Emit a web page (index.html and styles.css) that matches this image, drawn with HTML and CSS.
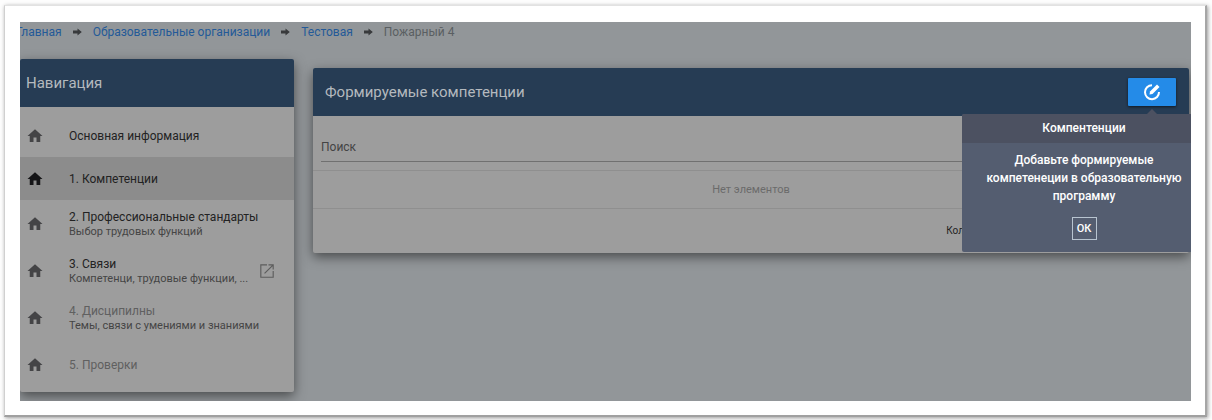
FILE: index.html
```html
<!DOCTYPE html>
<html lang="ru">

<head>
    <meta charset="UTF-8">
    <meta name="viewport" content="width=device-width, initial-scale=1.0">
    <title>Формируемые компетенции</title>
    <link rel="stylesheet" href="styles.css">
</head>

<body>
    <svg class="sprite" aria-hidden="true">
        <symbol id="home" viewBox="0 0 24 24">
            <path d="M10 20v-6h4v6h5v-8h3L12 3 2 12h3v8z" />
        </symbol>
        <symbol id="arrow" viewBox="0 0 10 8">
            <path d="M0 2.400h5V0l4.800 4L5 8V5.600H0z" />
        </symbol>
    </svg>

    <div class="frame">
        <div class="app">
            <nav class="breadcrumbs" aria-label="Путь">
                <a href="#">Главная</a>
                <svg class="arrow"><use href="#arrow" /></svg>
                <a href="#">Образовательные организации</a>
                <svg class="arrow"><use href="#arrow" /></svg>
                <a href="#">Тестовая</a>
                <svg class="arrow"><use href="#arrow" /></svg>
                <span>Пожарный 4</span>
            </nav>

            <div class="layout">
                <aside class="card sidebar">
                    <h2 class="card-header">Навигация</h2>
                    <ul class="menu">
                        <li><a class="item" href="#">
                            <svg class="home"><use href="#home" /></svg>
                            <span class="text"><span class="title">Основная информация</span></span>
                        </a></li>
                        <li><a class="item active" href="#">
                            <svg class="home"><use href="#home" /></svg>
                            <span class="text"><span class="title">1. Компетенции</span></span>
                        </a></li>
                        <li><a class="item two-line" href="#">
                            <svg class="home"><use href="#home" /></svg>
                            <span class="text">
                                <span class="title">2. Профессиональные стандарты</span>
                                <span class="subtitle">Выбор трудовых функций</span>
                            </span>
                        </a></li>
                        <li><a class="item two-line" href="#">
                            <svg class="home"><use href="#home" /></svg>
                            <span class="text">
                                <span class="title">3. Связи</span>
                                <span class="subtitle">Компетенци, трудовые функции, ...</span>
                            </span>
                            <svg class="open" viewBox="0 0 24 24">
                                <path d="M19.500 19.500h-15v-15H12V3H3v18h18v-9h-1.500zM14 3v1.500h4.400l-10.200 10.200 1.100 1.100L19.500 5.600V10H21V3z" />
                            </svg>
                        </a></li>
                        <li><a class="item two-line disabled" href="#">
                            <svg class="home"><use href="#home" /></svg>
                            <span class="text">
                                <span class="title">4. Дисципилны</span>
                                <span class="subtitle">Темы, связи с умениями и знаниями</span>
                            </span>
                        </a></li>
                        <li><a class="item two-line disabled" href="#">
                            <svg class="home"><use href="#home" /></svg>
                            <span class="text"><span class="title">5. Проверки</span></span>
                        </a></li>
                    </ul>
                </aside>

                <main class="card content">
                    <header class="card-header">
                        <h1>Формируемые компетенции</h1>
                        <button class="edit" type="button" aria-label="Изменить">
                            <svg viewBox="0 0 18 18">
                                <path class="ring" d="M9 2.200A7 7 0 1 0 16 9" />
                                <path class="pen" d="M6.500 11.500l.5-3L14 1.500l2.500 2.500L9.500 11z" />
                            </svg>
                        </button>
                        <div class="popover" role="dialog" aria-labelledby="hint">
                            <h3 id="hint">Компентенции</h3>
                            <div class="popover-body">
                                <p>Добавьте формируемые компетенеции в образовательную программу</p>
                                <button class="ok" type="button">ОК</button>
                            </div>
                        </div>
                    </header>
                    <div class="search">
                        <input type="text" placeholder="Поиск" aria-label="Поиск">
                    </div>
                    <p class="empty">Нет элементов</p>
                    <footer class="pager">Кол</footer>
                </main>
            </div>
        </div>
    </div>
</body>

</html>
```
FILE: styles.css
```css
* {
    box-sizing: border-box;
}

body {
    margin: 0;
    min-height: 100vh;
    display: flex;
    padding: 5px 5px 3px 4px;
    background: #fdfdfd;
    font-family: Roboto, "Liberation Sans", sans-serif;
    font-size: 12px;
    color: #222;
}

h1,
h2,
h3,
p,
ul {
    margin: 0;
    padding: 0;
    font-weight: 400;
}

a {
    color: inherit;
    text-decoration: none;
}

.sprite {
    position: absolute;
    width: 0;
    height: 0;
}

.frame {
    flex: 1;
    display: flex;
    padding: 16px 14px 14px 15px;
    background: #fff;
    border: 1px solid #d0d0d0;
    border-top-color: #e2e2e2;
    border-right: 2px solid #a6a6a6;
    border-bottom: 2px solid #a0a0a0;
    box-shadow: 1px 1px 4px #999;
}

.app {
    flex: 1;
    overflow: hidden;
    background: #929699;
}

.breadcrumbs {
    display: flex;
    align-items: center;
    gap: 11px;
    height: 20px;
    margin-left: -4px;
    color: #5a5f62;
}

.breadcrumbs a {
    color: #245a98;
}

.arrow {
    width: 9px;
    height: 8px;
    fill: #383a3c;
}

.layout {
    display: flex;
    align-items: flex-start;
    gap: 19px;
    padding: 17px 2px 0 0;
}

.card {
    background: #9d9d9d;
    border-radius: 2px;
    box-shadow: 0 4px 12px rgba(0, 0, 0, 0.5);
}

.card-header {
    position: relative;
    display: flex;
    align-items: center;
    justify-content: space-between;
    height: 48px;
    padding: 0 13px 0 12px;
    border-radius: 2px 2px 0 0;
    background: #263c54;
    color: #b4b9be;
    font-size: 15px;
}

.card-header h1 {
    font-size: 15px;
}

.sidebar {
    width: 274px;
}

.sidebar .card-header {
    padding-left: 6px;
}

.menu {
    padding: 7px 0 4px;
    list-style: none;
}

.item {
    display: flex;
    align-items: center;
    height: 43px;
    padding: 0 18px 0 6px;
}

.two-line {
    height: 47px;
}

.active {
    background: #8c8c8c;
}

.home {
    width: 18px;
    height: 18px;
    margin-right: 25px;
    fill: #444446;
}

.active .home {
    fill: #151517;
}

.text {
    flex: 1;
}

.title,
.subtitle {
    display: block;
    line-height: 16px;
}

.subtitle {
    line-height: 14px;
    font-size: 11px;
    color: #454545;
}

.disabled .title {
    color: #606060;
}

.open {
    width: 18px;
    height: 18px;
    fill: #5c5c5c;
}

.content {
    flex: 1;
    margin-top: 9px;
}

.edit {
    width: 48px;
    height: 28px;
    padding: 0;
    border: 0;
    border-radius: 1px;
    background: #248be8;
    box-shadow: 0 1px 3px rgba(0, 0, 0, 0.6);
}

.edit svg {
    display: block;
    width: 18px;
    height: 18px;
    margin: 0 auto;
}

.ring {
    fill: none;
    stroke: #fff;
    stroke-width: 2;
}

.pen {
    fill: #fff;
}

/* the hint hangs under the edit button and runs past the edge of the card */
.popover {
    position: absolute;
    top: 46px;
    right: -17px;
    width: 244px;
    border-radius: 2px;
    background: #545d70;
    color: #fff;
    font-size: 12px;
    text-align: center;
}

.popover::before {
    content: "";
    position: absolute;
    top: -5px;
    right: 49px;
    border: 5px solid transparent;
    border-top: 0;
    border-bottom-color: #4c5161;
}

.popover h3 {
    line-height: 29px;
    border-radius: 2px 2px 0 0;
    background: #4c5161;
    font-size: 12px;
    font-weight: 500;
}

.popover-body {
    padding: 8px 20px 12px;
}

.popover p {
    line-height: 18px;
    font-weight: 500;
}

.ok {
    width: 25px;
    height: 23px;
    margin-top: 12px;
    padding: 0;
    border: 1px solid #b8c4d0;
    background: transparent;
    color: #fff;
    font: 500 11px Roboto, "Liberation Sans", sans-serif;
}

.search {
    padding: 16px 8px 8px;
    border-bottom: 1px solid #8f8f8f;
}

.search input {
    display: block;
    width: 100%;
    height: 30px;
    padding: 0;
    border: 0;
    border-bottom: 1px solid #707070;
    background: transparent;
    font: 12px Roboto, "Liberation Sans", sans-serif;
}

.search input::placeholder {
    color: #444;
    opacity: 1;
}

.empty {
    line-height: 37px;
    border-bottom: 1px solid #8f8f8f;
    color: #6b6b6b;
    font-size: 11px;
    text-align: center;
}

.pager {
    padding-right: 225px;
    line-height: 44px;
    font-size: 10px;
    text-align: right;
}
```
